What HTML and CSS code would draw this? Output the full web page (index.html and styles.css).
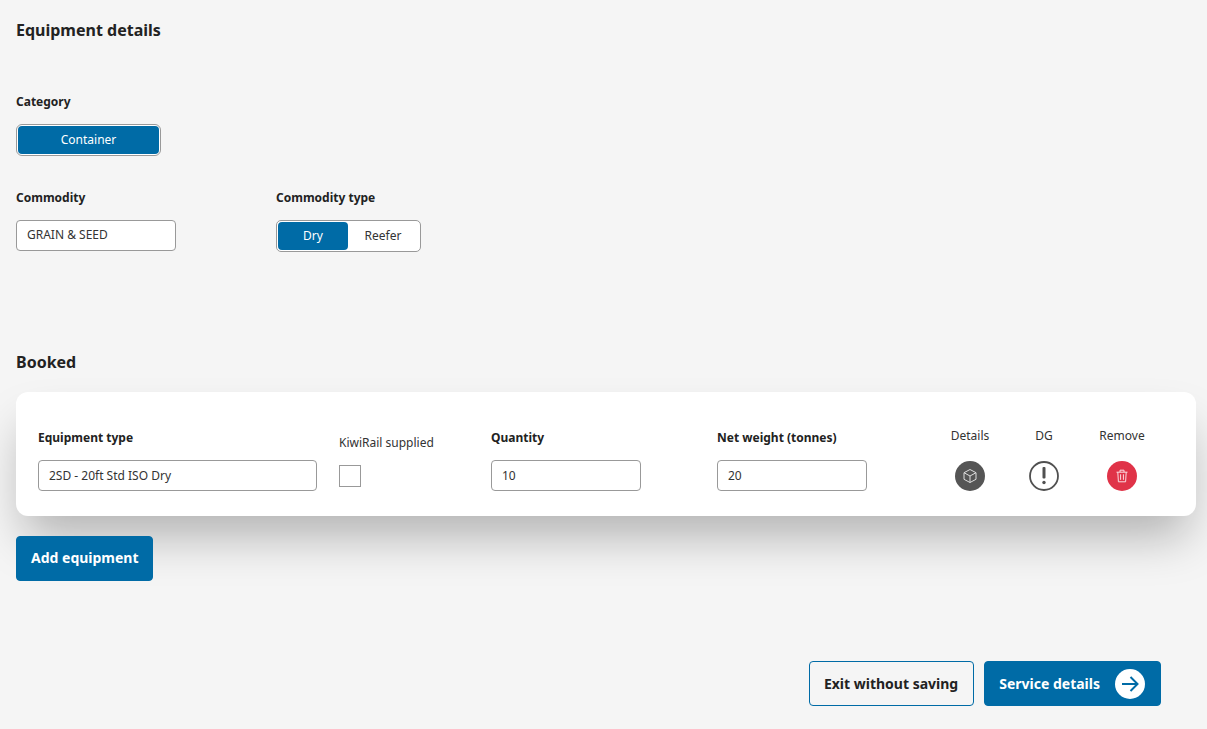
FILE: index.html
```html
<!DOCTYPE html>
<html lang="en">
<head>
<meta charset="utf-8">
<title>Equipment details</title>
<link rel="stylesheet" href="styles.css">
</head>
<body>
<main class="page">
  <h2 class="heading">Equipment details</h2>
  <div class="field category">
    <div class="label">Category</div>
    <div class="segment segment-single"><button class="seg-btn seg-on seg-wide">Container</button></div>
  </div>
  <div class="commodity-row">
    <div class="field commodity">
      <div class="label">Commodity</div>
      <input class="input input-commodity" value="GRAIN &amp; SEED">
    </div>
    <div class="field">
      <div class="label">Commodity type</div>
      <div class="segment segment-type">
        <button class="seg-btn seg-on seg-dry">Dry</button>
        <button class="seg-btn seg-reefer">Reefer</button>
      </div>
    </div>
  </div>
  <h2 class="heading heading-booked">Booked</h2>
  <section class="card">
    <div class="col col-type">
      <div class="label">Equipment type</div>
      <input class="input input-type" value="2SD - 20ft Std ISO Dry">
    </div>
    <div class="col col-kiwi">
      <div class="small-label">KiwiRail supplied</div>
      <div class="checkbox"></div>
    </div>
    <div class="col col-qty">
      <div class="label">Quantity</div>
      <input class="input input-num" value="10">
    </div>
    <div class="col col-net">
      <div class="label">Net weight (tonnes)</div>
      <input class="input input-num" value="20">
    </div>
    <div class="action action-details">
      <div class="small-label">Details</div>
      <span class="round round-grey">
        <svg width="16" height="16" viewBox="0 0 16 16" fill="none" stroke="#ddd" stroke-width="1" stroke-linejoin="round"><path d="M8 1.5 14 4.7v6.6L8 14.5 2 11.3V4.7z"/><path d="M2 4.7 8 8l6-3.3M8 8v6.5"/></svg>
      </span>
    </div>
    <div class="action action-dg">
      <div class="small-label">DG</div>
      <span class="round round-outline">
        <svg width="30" height="30" viewBox="0 0 30 30"><circle cx="15" cy="15" r="14" fill="none" stroke="#505050" stroke-width="1.8"/><rect x="13.5" y="6" width="3" height="11.5" rx="1" fill="#505050"/><circle cx="15" cy="21.5" r="1.7" fill="#505050"/></svg>
      </span>
    </div>
    <div class="action action-remove">
      <div class="small-label">Remove</div>
      <span class="round round-red">
        <svg width="14" height="14" viewBox="0 0 14 14" fill="none" stroke="#fbdde1" stroke-width="1"><path d="M1.5 3.2h11M5 3V1.2h4V3M2.8 3.2l.6 9.6h7.2l.6-9.6M5.6 5.3v5.5M8.4 5.3v5.5"/></svg>
      </span>
    </div>
  </section>
  <button class="btn btn-primary btn-add">Add equipment</button>
  <div class="footer">
    <button class="btn btn-outline">Exit without saving</button>
    <button class="btn btn-primary btn-next">Service details
      <span class="next-icon">
        <svg width="30" height="30" viewBox="0 0 30 30"><circle cx="15" cy="15" r="15" fill="#fff"/><path d="M7 15h15.5M15.5 8l7 7-7 7" fill="none" stroke="#006ba6" stroke-width="2"/></svg>
      </span>
    </button>
  </div>
</main>
</body>
</html>
```
FILE: styles.css
```css
* { box-sizing: border-box; }
html, body { margin: 0; padding: 0; }
body {
  background: #f5f5f5;
  font-family: "Noto Sans", sans-serif;
  color: #222;
  height: 729px;
  overflow: hidden;
}
.page { padding: 19px 11px 0 16px; }
.heading { margin: 0; font-size: 16px; line-height: 22px; font-weight: 700; color: #222; }
.label { font-size: 12px; line-height: 16px; font-weight: 700; color: #222; }
.small-label { font-size: 12px; line-height: 16px; color: #333; }
.category { margin-top: 53px; }
.category .label { margin-bottom: 14px; }
.segment {
  display: flex;
  height: 32px;
  padding: 1px;
  background: #fff;
  border: 1px solid #999;
  border-radius: 6px;
}
.segment-single { width: 145px; }
.seg-btn {
  border: 0;
  border-radius: 4px;
  background: transparent;
  font: 12px/16px "Noto Sans", sans-serif;
  color: #333;
  padding: 0;
}
.seg-on { background: #006ba6; color: #fff; }
.seg-wide { width: 100%; }
.commodity-row { display: flex; margin-top: 34px; }
.commodity { width: 260px; }
.commodity-row .label { margin-bottom: 14px; }
.input {
  display: block;
  height: 31px;
  padding: 0 10px;
  background: #fff;
  border: 1px solid #999;
  border-radius: 4px;
  font: 12px "Noto Sans", sans-serif;
  color: #333;
}
.input-commodity { width: 160px; padding-bottom: 2px; }
.input-type { width: 279px; }
.input-num { width: 150px; }
.segment-type { width: 145px; border-radius: 5px; }
.seg-dry { width: 70px; }
.seg-reefer { width: 70px; }
.heading-booked { margin-top: 99px; }
.card {
  display: flex;
  column-gap: 22px;
  align-items: flex-start;
  height: 124px;
  margin-top: 19px;
  padding: 36px 0 0 22px;
  background: #fff;
  border-radius: 12px;
  box-shadow: 0 28px 48px -8px rgba(0, 0, 0, .28);
}
.col-type, .col-qty, .col-net { padding-top: 2px; }
.col .label { margin-bottom: 14px; }
.col-type { width: 279px; }
.col-kiwi { width: 130px; }
.col-qty, .col-net { width: 150px; }
.col-kiwi .small-label { margin: 7px 0 14px; }
.col-net { margin-left: 54px; }
.checkbox { width: 22px; height: 22px; background: #fff; border: 1px solid #999; }
.action { width: 52px; text-align: center; }
.action-details { margin-left: 55px; }
.action-remove { margin-left: 4px; }
.round { display: block; width: 30px; height: 30px; border-radius: 50%; margin: 17px auto 0; }
.round svg { display: block; }
.round-grey, .round-red { display: flex; align-items: center; justify-content: center; }
.round-grey { background: #555; }
.round-red { background: #e03348; }
.btn {
  display: flex;
  align-items: center;
  height: 45px;
  border-radius: 4px;
  border: 1px solid #006ba6;
  font: 700 14px "Noto Sans", sans-serif;
  padding: 0 15px 0 14px;
}
.btn-primary { background: #006ba6; color: #fff; }
.btn-outline { background: transparent; color: #222; }
.btn-add { margin-top: 20px; padding: 0 13px 2px 14px; }
.footer { display: flex; justify-content: flex-end; gap: 10px; margin: 80px 35px 0 0; }
.next-icon { margin-left: 15px; display: block; }
.next-icon svg { display: block; }
```
